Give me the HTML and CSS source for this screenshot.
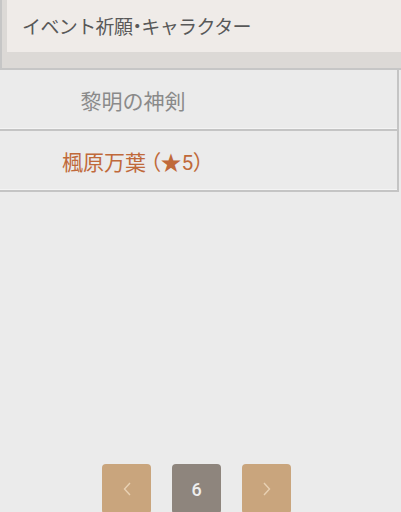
FILE: index.html
```html
<!DOCTYPE html>
<html lang="ja">
<head>
<meta charset="utf-8">
<link rel="stylesheet" href="styles.css">
</head>
<body>
<div class="head">
  <div class="head-inner">イベント祈願<span class="palt">・</span>キャラクター</div>
</div>
<div class="list">
  <div class="row"><span class="label weapon">黎明の神剣</span></div>
  <div class="row"><span class="label char">楓原万葉<span class="palt open">（</span>★5<span class="palt">）</span></span></div>
</div>
<div class="pager">
  <button class="pg nav" aria-label="前へ">
    <svg width="8" height="14" viewBox="0 0 8 14"><polyline points="7,1 1.5,7 7,13" fill="none" stroke="#e8d1b3" stroke-width="1.4"/></svg>
  </button>
  <button class="pg cur">6</button>
  <button class="pg nav" aria-label="次へ">
    <svg width="8" height="14" viewBox="0 0 8 14"><polyline points="1,1 6.5,7 1,13" fill="none" stroke="#e8d1b3" stroke-width="1.4"/></svg>
  </button>
</div>
</body>
</html>
```

FILE: styles.css
```css
html, body {
  margin: 0;
  padding: 0;
}
body {
  background: #ebebeb;
  font-family: Roboto, "Noto Sans CJK JP", sans-serif;
  height: 512px;
  overflow: hidden;
}
.palt {
  font-feature-settings: "palt" 1;
}
.open {
  margin-left: 4px;
}
.head {
  border-left: 2px solid #c6c6c6;
  border-bottom: 2px solid #c6c6c6;
  background: #dcd9d6;
  padding: 0 0 16px 5px;
}
.head-inner {
  background: #efebe8;
  height: 52px;
  padding-left: 15px;
  padding-bottom: 1px;
  box-sizing: border-box;
  display: flex;
  align-items: center;
  font-size: 19px;
  letter-spacing: -0.6px;
  color: #585858;
}
.list {
  width: 397px;
  border-right: 2px solid #c4c4c4;
}
.row {
  height: 59px;
  border-bottom: 2px solid #c4c4c4;
  box-shadow: inset 0 -1px 0 #f4f4f4;
  display: flex;
  align-items: center;
}
.label {
  width: 266px;
  text-align: center;
  font-size: 21px;
}
.weapon {
  color: #8a8a8a;
}
.char {
  color: #c0693a;
}
.pager {
  margin-top: 272px;
  padding-right: 8px;
  display: flex;
  justify-content: center;
  gap: 21px;
}
.pg {
  width: 49px;
  height: 50px;
  border: none;
  border-radius: 4px;
  padding: 0;
  display: flex;
  align-items: center;
  justify-content: center;
  font-family: Roboto, sans-serif;
  font-size: 18px;
  font-weight: 500;
  color: #eeeeee;
}
.nav {
  background: #c9a57d;
}
.cur {
  background: #8e857d;
}
```
